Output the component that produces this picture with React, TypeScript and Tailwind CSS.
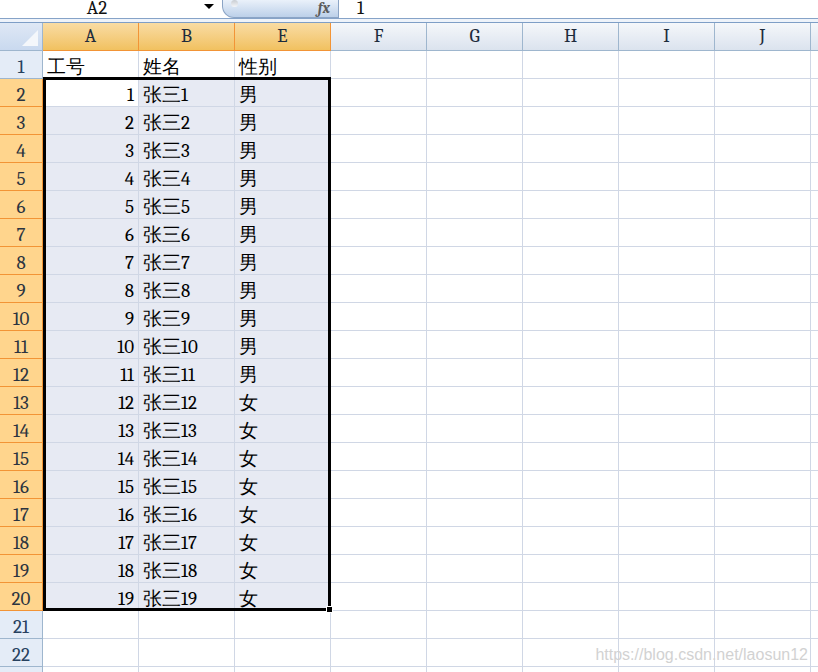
import React from 'react'

const cols = [
  { label: 'A', sel: true },
  { label: 'B', sel: true },
  { label: 'E', sel: true },
  { label: 'F', sel: false },
  { label: 'G', sel: false },
  { label: 'H', sel: false },
  { label: 'I', sel: false },
  { label: 'J', sel: false },
]

type Row = { n: number; a?: string; b?: string; e?: string; num?: boolean }

const rows: Row[] = [{ n: 1, a: '工号', b: '姓名', e: '性别' }]
for (let i = 1; i <= 19; i++) {
  rows.push({ n: i + 1, a: String(i), b: `张三${i}`, e: i <= 11 ? '男' : '女', num: true })
}
rows.push({ n: 21 }, { n: 22 }, { n: 23 })

function FormulaBar() {
  return (
    <div className="flex h-[19px] border-b border-[#86a3c8] bg-white">
      <div className="relative flex w-[222px] shrink-0 items-end">
        <span className="w-[194px] text-center text-[19px] leading-[19px] text-[#111]">A2</span>
        <span className="absolute left-[204px] top-[4px] h-0 w-0 border-x-[5px] border-t-[5px] border-x-transparent border-t-black" />
      </div>
      <div className="relative flex h-[18px] w-[117px] shrink-0 items-center justify-end rounded-bl-[12px] border border-t-0 border-[#8ba4c5] bg-gradient-to-b from-[#eaf1fa] to-[#bcd0e9] pr-[8px]">
        <span className="absolute left-[8px] top-[0px] h-[7px] w-[7px] rounded-full bg-gradient-to-b from-[#c8ccd2] to-[#f4f6f9]" />
        <span className="text-[15px] font-bold italic leading-none text-[#5b5b5b]">fx</span>
      </div>
      <div className="flex flex-1 items-end pl-[18px]">
        <span className="text-[19px] leading-[19px] text-[#111]">1</span>
      </div>
    </div>
  )
}

function HeaderRow() {
  return (
    <div className="flex h-[29px] border-t border-[#7e9ec6]">
      <div className="relative h-full w-[43px] shrink-0 border-b border-r border-[#9eb6ce] bg-gradient-to-b from-[#dfe8f5] to-[#c9d9ef]">
        <span className="absolute bottom-[4px] right-[4px] h-0 w-0 border-b-[16px] border-l-[16px] border-b-[#f4f7fb] border-l-transparent" />
      </div>
      {cols.map((c) => (
        <div
          key={c.label}
          className={
            c.sel
              ? 'flex h-full w-[96px] shrink-0 items-center justify-center border-b border-r border-[#f29436] bg-gradient-to-b from-[#f9dca3] to-[#f1c15f] text-[19px] text-[#1d2b3c]'
              : 'flex h-full w-[96px] shrink-0 items-center justify-center border-b border-r border-[#9eb6ce] bg-gradient-to-b from-[#f5f7fa] to-[#dbe3ee] text-[19px] text-[#1d2b3c]'
          }
        >
          {c.label}
        </div>
      ))}
      <div className="h-full flex-1 border-b border-[#9eb6ce] bg-gradient-to-b from-[#f5f7fa] to-[#dbe3ee]" />
    </div>
  )
}

function Cell({ text, right, bg }: { text?: string; right?: boolean; bg: string }) {
  return (
    <div
      className={`flex h-full w-[96px] shrink-0 items-end border-b border-r border-[#d0d7e5] text-[19px] leading-[22px] text-black ${bg} ${
        right ? 'justify-end pr-[4px]' : 'pl-[4px]'
      }`}
    >
      {text}
    </div>
  )
}

function DataRow({ row }: { row: Row }) {
  const sel = row.n >= 2 && row.n <= 20
  const fill = sel ? 'bg-[#e7eaf3]' : 'bg-white'
  return (
    <div className="flex h-[28px]">
      <div
        className={
          sel
            ? 'flex h-full w-[43px] shrink-0 items-end justify-center border-b border-r border-[#f29436] bg-[#ffd58d] text-[19px] leading-[22px] text-[#2b3440]'
            : 'flex h-full w-[43px] shrink-0 items-end justify-center border-b border-r border-[#9eb6ce] bg-[#e4ecf7] text-[19px] leading-[22px] text-[#27415f]'
        }
      >
        {row.n}
      </div>
      <Cell text={row.a} right={row.num} bg={row.n === 2 ? 'bg-white' : fill} />
      <Cell text={row.b} bg={fill} />
      <Cell text={row.e} bg={fill} />
      {[0, 1, 2, 3, 4].map((i) => (
        <Cell key={i} bg="bg-white" />
      ))}
      <div className="h-full flex-1 border-b border-[#d0d7e5] bg-white" />
    </div>
  )
}

export default function App() {
  return (
    <div className="relative h-[672px] w-[818px] overflow-hidden bg-white font-serif">
      <FormulaBar />
      <div className="h-[3px] bg-[#eef3fa]" />
      <HeaderRow />
      {rows.map((r) => (
        <DataRow key={r.n} row={r} />
      ))}

      {/* selection outline A2:E20 */}
      <div className="pointer-events-none absolute left-[43px] top-[77px] h-[534px] w-[288px] border-[3px] border-black" />
      <div className="pointer-events-none absolute left-[326px] top-[606px] h-[7px] w-[7px] border border-white bg-black" />

      <div className="pointer-events-none absolute right-[10px] top-[643px] font-['Liberation_Sans',sans-serif] text-[16px] text-[#d2d2d2]">
        https://blog.csdn.net/laosun12
      </div>
    </div>
  )
}
